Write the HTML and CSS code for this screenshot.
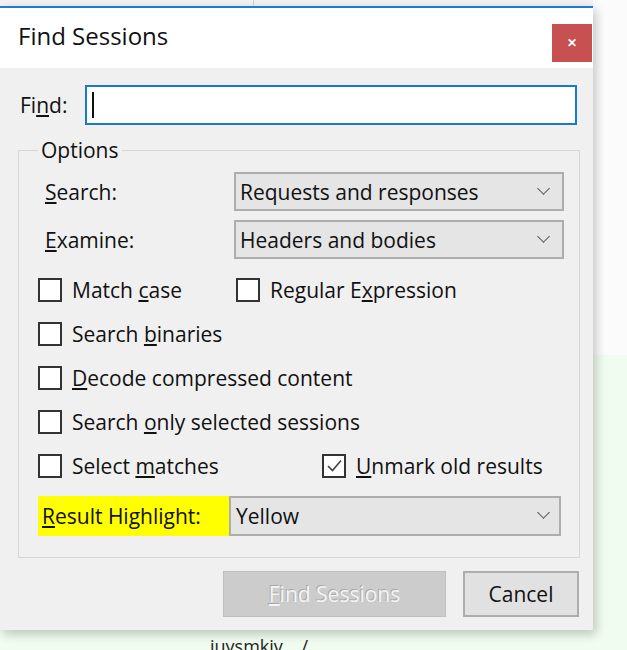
FILE: index.html
```html
<!DOCTYPE html>
<html lang="en">

<head>
    <title>Find Sessions</title>
    <meta charset="utf-8">
    <link rel="stylesheet" href="styles.css">
</head>

<body>
    <div class="behind"><div class="behind-pane"></div></div>

    <div class="dialog">
        <div class="titlebar">
            <span class="title">Find Sessions</span>
            <button class="close">&#x2715;</button>
        </div>

        <div class="body">
            <div class="find-row">
                <label class="find-label">Fi<u>n</u>d:</label>
                <div class="find-input"><span class="caret"></span></div>
            </div>

            <fieldset class="options">
                <legend>Options</legend>

                <div class="pick-row">
                    <span class="pick-label"><u>S</u>earch:</span>
                    <div class="combo"><span>Requests and responses</span><span class="chev"></span></div>
                </div>
                <div class="pick-row">
                    <span class="pick-label"><u>E</u>xamine:</span>
                    <div class="combo"><span>Headers and bodies</span><span class="chev"></span></div>
                </div>

                <div class="check-row">
                    <span class="check c1"><span class="box"></span><span>Match <u>c</u>ase</span></span>
                    <span class="check"><span class="box"></span><span>Regular E<u>x</u>pression</span></span>
                </div>
                <div class="check-row">
                    <span class="check c1"><span class="box"></span><span>Search <u>b</u>inaries</span></span>
                </div>
                <div class="check-row">
                    <span class="check c1"><span class="box"></span><span><u>D</u>ecode compressed content</span></span>
                </div>
                <div class="check-row">
                    <span class="check c1"><span class="box"></span><span>Search <u>o</u>nly selected sessions</span></span>
                </div>
                <div class="check-row">
                    <span class="check c1 wide"><span class="box"></span><span>Select <u>m</u>atches</span></span>
                    <span class="check"><span class="box on">
                        <svg width="18" height="18" viewBox="0 0 18 18"><path d="M3 9 L7.5 13.5 L16 3.5" fill="none" stroke="#444" stroke-width="1.6"/></svg>
                    </span><span><u>U</u>nmark old results</span></span>
                </div>

                <div class="result-row">
                    <span class="result-label"><span><u>R</u>esult Highlight:</span></span>
                    <div class="combo wide"><span>Yellow</span><span class="chev"></span></div>
                </div>
            </fieldset>

            <div class="buttons">
                <button class="btn disabled"><u>F</u>ind Sessions</button>
                <button class="btn cancel">Cancel</button>
            </div>
        </div>
    </div>

    <div class="under">iuysmkiv&nbsp;&nbsp;&nbsp;&nbsp;/</div>
</body>

</html>
```

FILE: styles.css
```css
html,
body {
    margin: 0;
    padding: 0;
}

body {
    width: 627px;
    height: 650px;
    overflow: hidden;
    background: linear-gradient(#fbfbfb 0, #fbfbfb 355px, #f0fcef 355px);
    font-family: "Open Sans", "Noto Sans", sans-serif;
    color: #111;
}

.behind {
    height: 6px;
    width: 593px;
    background-color: #f2f2f2;
}

.behind-pane {
    width: 253px;
    height: 6px;
    border-right: 1px solid #d0d0d0;
}

.dialog {
    width: 593px;
    border-top: 2px solid #1f7bd1;
    background-color: #f0f0f0;
    box-shadow: 3px 4px 10px rgba(0, 0, 0, 0.22);
}

.titlebar {
    height: 60px;
    background-color: white;
    display: flex;
    align-items: flex-start;
    justify-content: space-between;
}

.title {
    font-size: 24px;
    margin: 11px 0 0 18px;
    color: #111;
}

.close {
    width: 40px;
    height: 38px;
    margin-top: 16px;
    margin-right: 1px;
    border: none;
    background-color: #c75050;
    color: white;
    font-size: 12px;
    font-weight: bold;
    padding: 0;
}

.body {
    padding: 17px 13px 13px 18px;
}

.find-row {
    display: flex;
    align-items: center;
    height: 40px;
}

.find-label {
    font-size: 21px;
    width: 65px;
    padding-left: 2px;
}

.find-input {
    width: 488px;
    height: 36px;
    border: 2px solid #1979ca;
    background-color: white;
    display: flex;
    align-items: center;
}

.caret {
    width: 2px;
    height: 26px;
    margin-left: 5px;
    background-color: #111;
}

.options {
    margin: 15px 0 0 0;
    padding: 12px 15px 21px 19px;
    border: 1px solid #d6d6d6;
    width: 526px;
}

.options legend {
    font-size: 21px;
    padding: 0 3px;
    margin-left: 0;
    line-height: 20px;
}

.pick-row {
    display: flex;
    align-items: center;
    margin-bottom: 9px;
    font-size: 21px;
}

.pick-label {
    width: 189px;
    padding-left: 7px;
}

.combo {
    position: relative;
    width: 322px;
    height: 35px;
    border: 2px solid #adadad;
    background-color: #e5e5e5;
    font-size: 21px;
    display: flex;
    align-items: center;
    padding-left: 4px;
    flex-shrink: 0;
}

.combo.wide {
    width: 323px;
    height: 36px;
    padding-left: 5px;
}

.chev {
    position: absolute;
    right: 14px;
    top: 10px;
    width: 8px;
    height: 8px;
    border-right: 1.3px solid #555;
    border-bottom: 1.3px solid #555;
    transform: rotate(45deg);
}

.combo.wide .chev {
    right: 11px;
}

.check-row {
    display: flex;
    align-items: center;
    height: 44px;
    font-size: 21px;
    white-space: nowrap;
}

.check {
    display: flex;
    align-items: center;
    flex-shrink: 0;
}

.c1 {
    min-width: 198px;
}

.c1.wide {
    min-width: 284px;
}

.box {
    width: 20px;
    height: 20px;
    border: 2px solid #333;
    background-color: white;
    margin-right: 10px;
    display: flex;
    align-items: center;
    justify-content: center;
    flex-shrink: 0;
}

.box.on svg {
    display: block;
}

.result-row {
    display: flex;
    align-items: stretch;
    margin-top: 8px;
}

.result-label {
    width: 187px;
    background-color: #ffff00;
    font-size: 21px;
    padding-left: 4px;
    display: flex;
    align-items: center;
}

.buttons {
    display: flex;
    justify-content: flex-end;
    gap: 17px;
    margin-top: 13px;
    padding-right: 1px;
}

.btn {
    height: 46px;
    font-family: "Open Sans", "Noto Sans", sans-serif;
    font-size: 21px;
    padding: 0;
}

.btn.disabled {
    width: 223px;
    border: 1px solid #bfbfbf;
    background-color: #cccccc;
    color: #f4f4f4;
    text-shadow: -1px -1px 0 #a8a8a8;
}

.btn.cancel {
    width: 116px;
    border: 2px solid #adadad;
    background-color: #e1e1e1;
    color: #111;
}

.under {
    margin: 4px 0 0 210px;
    font-size: 18px;
    color: #222;
}
```
